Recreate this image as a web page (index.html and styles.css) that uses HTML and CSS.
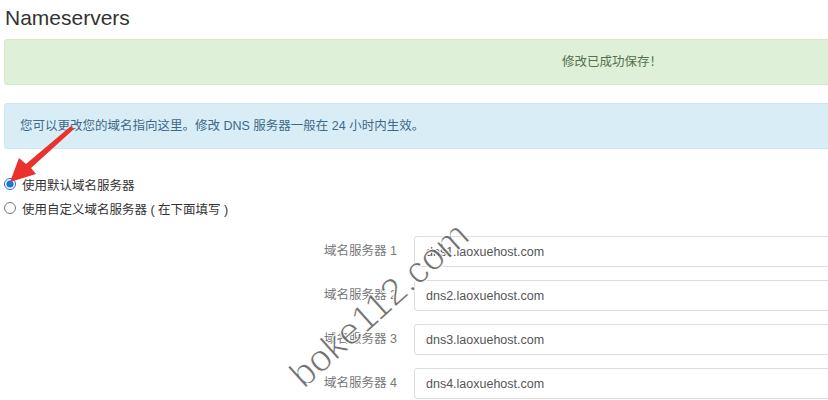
FILE: index.html
```html
<!DOCTYPE html>
<html lang="zh-CN">

<head>
  <meta charset="UTF-8">
  <title>Nameservers</title>
  <link rel="stylesheet" href="styles.css">
</head>

<body>
  <div class="page">
    <h2 class="title">Nameservers</h2>

    <div class="alert alert_success">修改已成功保存！</div>
    <div class="alert alert_info">您可以更改您的域名指向这里。修改 DNS 服务器一般在 24 小时内生效。</div>

    <div class="radios">
      <label class="radio"><input type="radio" name="ns" checked> 使用默认域名服务器</label>
      <label class="radio"><input type="radio" name="ns"> 使用自定义域名服务器 ( 在下面填写 )</label>
    </div>

    <div class="ns_form">
      <label class="ns_label">域名服务器 1</label>
      <input class="ns_input" type="text" value="dns1.laoxuehost.com">
      <label class="ns_label">域名服务器 2</label>
      <input class="ns_input" type="text" value="dns2.laoxuehost.com">
      <label class="ns_label">域名服务器 3</label>
      <input class="ns_input" type="text" value="dns3.laoxuehost.com">
      <label class="ns_label">域名服务器 4</label>
      <input class="ns_input" type="text" value="dns4.laoxuehost.com">
    </div>
  </div>

  <!-- 标注箭头 -->
  <svg class="arrow" width="90" height="70" viewBox="0 0 90 70">
    <polygon points="71,4 74,7 31,46 36,52 10,60 19,36 26,42" fill="#e8322b" />
  </svg>

  <div class="watermark">boke112.com</div>
</body>

</html>
```
FILE: styles.css
```css
html,
body {
  width: 100%;
  height: 100%;
  overflow: hidden;
}

body {
  margin: 0;
  background: #fff;
  font-family: 'Liberation Sans', Arial, 'Noto Sans CJK SC', sans-serif;
  color: #333;
}

.page {
  width: 1216px;
  padding: 0 0 0 4px;
}

.title {
  font-size: 21px;
  font-weight: normal;
  margin: 0;
  padding: 6px 0 0 1px;
  height: 33px;
  line-height: 24px;
}

.alert {
  height: 44px;
  line-height: 44px;
  font-size: 12.5px;
  border: 1px solid;
  border-radius: 3px;
  padding: 0 15px;
}

.alert_success {
  background-color: #dff0d8;
  border-color: #d6e9c6;
  color: #56704f;
  text-align: center;
}

.alert_info {
  margin-top: 18px;
  background-color: #d9edf7;
  border-color: #cde6f1;
  color: #3d6a86;
}

.radios {
  margin-top: 23px;
}

.radio {
  display: flex;
  align-items: center;
  height: 24px;
  font-size: 12.5px;
  color: #333;
}

.radio input {
  width: 12px;
  height: 12px;
  margin: 0 6px 0 0;
  accent-color: #1a73d9;
}

.ns_form {
  display: grid;
  grid-template-columns: 393px 1fr;
  column-gap: 17px;
  row-gap: 13px;
  margin-top: 16px;
}

.ns_label {
  text-align: right;
  font-size: 12.5px;
  color: #777;
  line-height: 31px;
}

.ns_input {
  height: 31px;
  box-sizing: border-box;
  border: 1px solid #ddd;
  border-radius: 3px;
  padding: 0 11px;
  font-family: 'Liberation Sans', Arial, sans-serif;
  font-size: 12.5px;
  color: #555;
  background: #fff;
}

.arrow {
  position: absolute;
  left: 0;
  top: 122px;
}

.watermark {
  position: absolute;
  left: 308px;
  top: 356px;
  font-size: 38px;
  color: rgba(90, 90, 90, 0.85);
  -webkit-text-stroke: 1px #fff;
  transform: rotate(-42deg);
  transform-origin: left bottom;
  white-space: nowrap;
  line-height: 1;
}
```
